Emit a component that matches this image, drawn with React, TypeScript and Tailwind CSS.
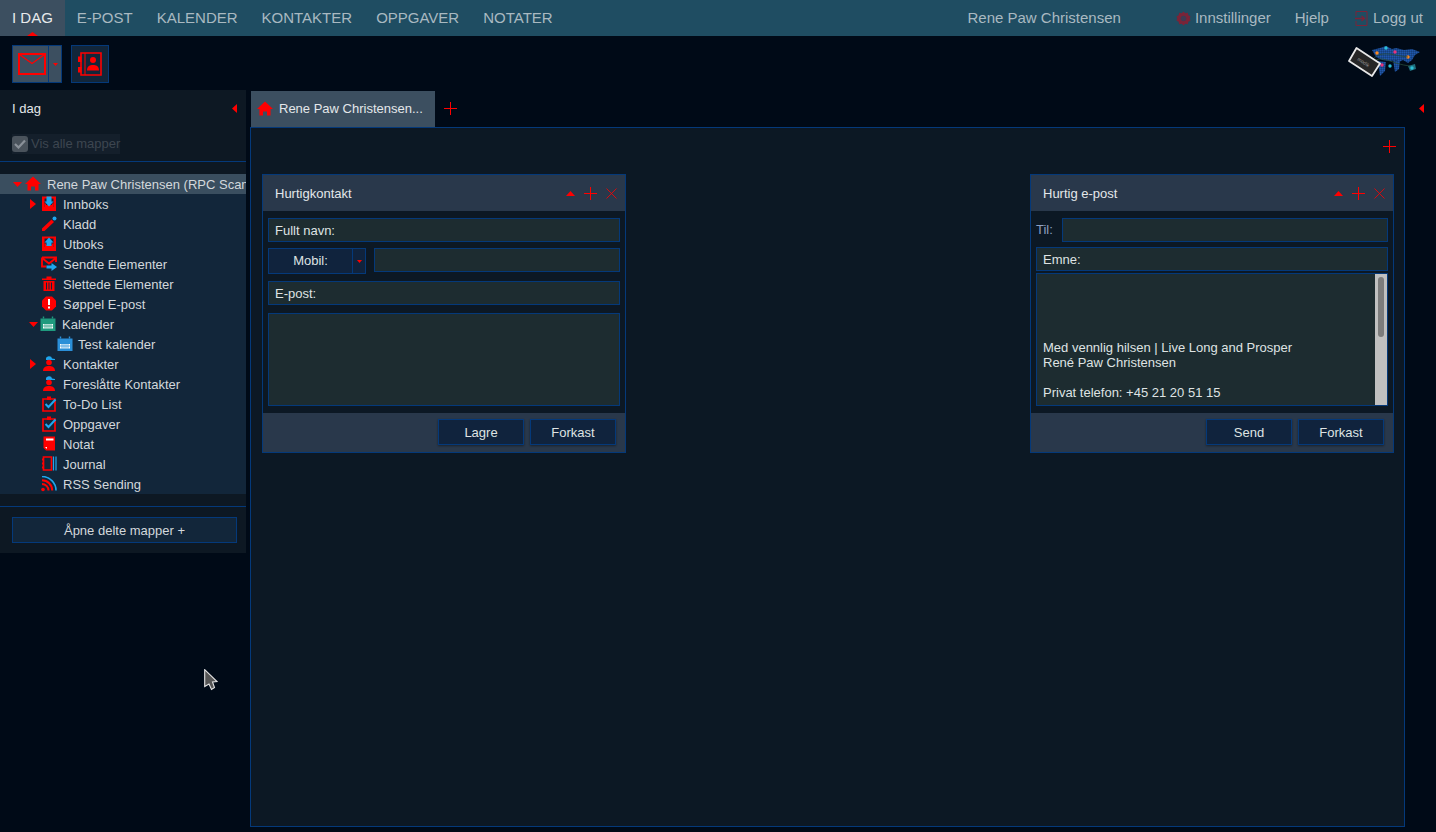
import React from "react";

const R = "#ff0000";
const B = "#1ea7ee";

const Home = () => (
  <svg width="16" height="16" viewBox="0 0 16 16"><path d="M8 0.5 L16 8 H13.5 V14.5 H10 V10.5 H6 V14.5 H2.5 V8 H0 Z" fill={R} /></svg>
);
const Inbox = ({ up }: { up?: boolean }) => (
  <svg width="16" height="16" viewBox="0 0 16 16">
    <path d="M1 0.5 H15 V15 H1 Z M3.5 2.5 V11 H12.5 V2.5 Z" fill={R} fillRule="evenodd" />
    <path d="M5 7.5 H3.5 V11 H12.5 V7.5 H11 V9 H5 Z" fill={R} />
    {up ? <path d="M8 1.5 L12.5 6.5 H10.5 V10 H5.5 V6.5 H3.5 Z" fill={B} /> : <path d="M8 10.5 L12.5 5.5 H10.5 V0.5 H5.5 V5.5 H3.5 Z" fill={B} />}
  </svg>
);
const Pencil = () => (
  <svg width="16" height="16" viewBox="0 0 16 16">
    <path d="M1 12.5 L10.5 3.5 L13 6 L3.5 15 H1 Z" fill={R} />
    <circle cx="13.5" cy="2.5" r="2" fill={B} />
  </svg>
);
const Sent = () => (
  <svg width="16" height="16" viewBox="0 0 16 16">
    <path d="M1 1.5 H15 V6 M1 1.5 V10.5 H5.5 M1 2 L8 7.5 L15 2" fill="none" stroke={R} strokeWidth="1.9" />
    <path d="M5.5 9.5 H10.5 V7 L16 11 L10.5 15 V12.5 H5.5 Z" fill={B} />
  </svg>
);
const Trash = () => (
  <svg width="16" height="16" viewBox="0 0 16 16">
    <path d="M1 2.5 H15 V4 H1 Z M5.5 0.5 H10.5 V2.5 H5.5 Z" fill={R} />
    <path d="M2.5 5 H13.5 V15 H2.5 Z" fill={R} />
    <path d="M5.5 6.5 V13.5 M8 6.5 V13.5 M10.5 6.5 V13.5" stroke="#12263a" strokeWidth="1" />
  </svg>
);
const Alert = () => (
  <svg width="16" height="16" viewBox="0 0 16 16">
    <path d="M5 0.5 H11 L15 4.5 V10.5 L11 14.5 H5 L1 10.5 V4.5 Z" fill={R} />
    <path d="M7 3 H9 V9 H7 Z M7 10.5 H9 V12.5 H7 Z" fill="#fff" />
  </svg>
);
const Cal = ({ c }: { c: string }) => (
  <svg width="16" height="16" viewBox="0 0 16 16">
    <path d="M0.5 2.5 H15.5 V15 H0.5 Z" fill={c} />
    <path d="M3.5 0.5 V2.5 M12.5 0.5 V2.5" stroke={c} strokeWidth="1.4" />
    <path d="M3 8 H13 V12.5 H3 Z" fill="#fff" />
    <path d="M5 8 V12.5 M7 8 V12.5 M9 8 V12.5 M11 8 V12.5 M3 10 H13" stroke={c} strokeWidth="0.7" />
  </svg>
);
const Person = () => (
  <svg width="16" height="16" viewBox="0 0 16 16">
    <path d="M5 3 A3 2.6 0 0 1 11 2.5 L14 3 V4 H5 Z" fill={B} />
    <circle cx="8" cy="6.5" r="2.8" fill={R} />
    <path d="M2 15 C2 11 5 10 8 10 C11 10 14 11 14 15 Z" fill={R} />
  </svg>
);
const Todo = () => (
  <svg width="16" height="16" viewBox="0 0 16 16">
    <path d="M2 3 H14 V15 H2 Z" fill="none" stroke={R} strokeWidth="1.7" />
    <path d="M6 0.5 H10 V4 H6 Z" fill={R} />
    <path d="M4.5 8 L7.5 11 L14.5 3.5" fill="none" stroke={B} strokeWidth="2" />
  </svg>
);
const Note = () => (
  <svg width="16" height="16" viewBox="0 0 16 16">
    <path d="M2.5 0.5 H14 V14.5 H5 L2.5 12 Z" fill={R} />
    <path d="M5 2.5 H12.5 V4.5 H5 Z" fill="#fff" />
    <path d="M4 11 H6 V13 Z" fill="#fff" />
  </svg>
);
const Journal = () => (
  <svg width="16" height="16" viewBox="0 0 16 16">
    <path d="M2.5 1 H10.5 V14 H2.5 Z" fill="none" stroke={R} strokeWidth="1.7" />
    <path d="M1 3.5 H2.5 M1 7.5 H2.5 M1 11.5 H2.5" stroke={R} strokeWidth="2" />
    <path d="M12.5 0.5 V14.5 M15 0.5 V14.5" stroke={B} strokeWidth="1.2" />
  </svg>
);
const Rss = () => (
  <svg width="16" height="16" viewBox="0 0 16 16" fill="none">
    <circle cx="2" cy="13.5" r="1.8" fill={R} />
    <path d="M1 8 A6.5 6.5 0 0 1 7.5 14.5" stroke={R} strokeWidth="2" />
    <path d="M1 4.3 A10.2 10.2 0 0 1 11.2 14.5" stroke={R} strokeWidth="2" />
    <path d="M1 0.5 A14 14 0 0 1 15 14.5" stroke={B} strokeWidth="1.6" />
  </svg>
);
const ArrowR = () => <svg width="6" height="10" viewBox="0 0 6 10"><path d="M0 0 L6 5 L0 10 Z" fill={R} /></svg>;
const ArrowL = () => <svg width="5" height="9" viewBox="0 0 5 9"><path d="M5 0 L0 4.5 L5 9 Z" fill={R} /></svg>;
const ArrowD = () => <svg width="9" height="5" viewBox="0 0 9 5"><path d="M0 0 H9 L4.5 5 Z" fill={R} /></svg>;

const Plus = () => (
  <svg width="13" height="13" viewBox="0 0 13 13"><path d="M6.5 0 V13 M0 6.5 H13" stroke={R} strokeWidth="1" /></svg>
);

type Row = { label: string; icon: React.ReactNode; arrow?: "r" | "d"; cls: string };
const rows: Row[] = [
  { label: "Innboks", icon: <Inbox />, arrow: "r", cls: "pl-[30px]" },
  { label: "Kladd", icon: <Pencil />, cls: "pl-[30px]" },
  { label: "Utboks", icon: <Inbox up />, cls: "pl-[30px]" },
  { label: "Sendte Elementer", icon: <Sent />, cls: "pl-[30px]" },
  { label: "Slettede Elementer", icon: <Trash />, cls: "pl-[30px]" },
  { label: "Søppel E-post", icon: <Alert />, cls: "pl-[30px]" },
  { label: "Kalender", icon: <Cal c="#1f9a7e" />, arrow: "d", cls: "pl-[29px]" },
  { label: "Test kalender", icon: <Cal c="#2a8fd8" />, cls: "pl-[46px]" },
  { label: "Kontakter", icon: <Person />, arrow: "r", cls: "pl-[30px]" },
  { label: "Foreslåtte Kontakter", icon: <Person />, cls: "pl-[30px]" },
  { label: "To-Do List", icon: <Todo />, cls: "pl-[30px]" },
  { label: "Oppgaver", icon: <Todo />, cls: "pl-[30px]" },
  { label: "Notat", icon: <Note />, cls: "pl-[30px]" },
  { label: "Journal", icon: <Journal />, cls: "pl-[30px]" },
  { label: "RSS Sending", icon: <Rss />, cls: "pl-[30px]" },
];

const Field = ({ children, className = "" }: { children?: React.ReactNode; className?: string }) => (
  <div className={`h-6 border border-[#04397a] bg-[#1d2c30] px-[6px] text-[13px] leading-[23px] text-[#dfe3e3] ${className}`}>{children}</div>
);

const Btn = ({ children }: { children: React.ReactNode }) => (
  <div className="h-[26px] w-[86px] border border-[#04397a] bg-[#10233d] text-center text-[13px] leading-[25px] text-[#dfe3e3] shadow-[0_1px_2px_rgba(0,0,0,0.4)]">{children}</div>
);

const Widget = ({ title, children, buttons }: { title: string; children: React.ReactNode; buttons: string[] }) => (
  <div className="flex h-[279px] w-[364px] flex-col border border-[#04397a] bg-[#0c1824]">
    <div className="flex h-[36px] shrink-0 items-start bg-[#29384b] pl-3 pr-[8px] text-[13px] text-[#e4e7ea]">
      <span className="flex-1 leading-[37px]">{title}</span>
      <svg width="9" height="5" viewBox="0 0 9 5" className="mr-[9px] mt-[16px]"><path d="M0 5 H9 L4.5 0 Z" fill={R} /></svg>
      <span className="mr-[9px] mt-[12px] flex"><Plus /></span>
      <svg width="11" height="11" viewBox="0 0 11 11" className="mt-[13px]"><path d="M0.5 0.5 L10.5 10.5 M10.5 0.5 L0.5 10.5" stroke={R} strokeWidth="0.8" /></svg>
    </div>
    <div className="h-[202px] shrink-0 px-[5px] pt-[7px]">{children}</div>
    <div className="flex flex-1 items-start justify-end gap-[6px] bg-[#29384b] pr-[9px] pt-[6px]">
      {buttons.map((b) => <Btn key={b}>{b}</Btn>)}
    </div>
  </div>
);

const Logo = () => {
  const dots: [number, number, string][] = [
    [1377, 53, "#ff8a1e"], [1395, 52, "#e8337a"], [1408, 57, "#ff8a1e"], [1382, 65, "#e8337a"], [1390, 66, "#2cc0d8"], [1412, 68, "#2cc0d8"], [1386, 48, "#2cc0d8"],
  ];
  return (
    <svg width="76" height="34" viewBox="1347 44 76 34">
      <defs>
        <pattern id="logo-grid" width="2" height="2" patternUnits="userSpaceOnUse">
          <rect width="2" height="2" fill="#2058ac" />
          <rect x="1.5" width="0.5" height="2" fill="#000a17" opacity="0.35" />
          <rect y="1.5" width="2" height="0.5" fill="#000a17" opacity="0.35" />
        </pattern>
      </defs>
      <path d="M1372 50 L1380 48 L1386 46 L1392 49 L1396 48 L1404 50 L1412 49 L1420 52 L1415 55 L1412 60 L1408 63 L1403 60 L1399 62 L1396 60 L1390 61 L1382 60 L1376 57 Z" fill="url(#logo-grid)" />
      <path d="M1378 61 L1386 62 L1385 71 L1380 76 L1379 69 Z" fill="url(#logo-grid)" />
      <path d="M1393 60 L1400 61 L1399 69 L1395 72 Z" fill="url(#logo-grid)" />
      <path d="M1408 66 L1415 64 L1416 69 L1410 71 Z" fill="#1f6f7e" />
      {dots.map(([x, y, c], i) => <circle key={i} cx={x} cy={y} r="1.7" fill={c} />)}
      <path d="M1374 58 C1382 50 1396 56 1408 57 M1376 60 C1384 56 1392 64 1410 66" stroke="#274a3a" strokeWidth="0.8" fill="none" />
      <path d="M1356.5 48 L1380 63.5 L1372 76 L1349 61 Z" fill="#262626" stroke="#e8e8e8" strokeWidth="1.8" strokeLinejoin="round" />
      <text x="1357" y="60" fontSize="5" fill="#9a9a9a" transform="rotate(33 1357 60)">modik</text>
    </svg>
  );
};

export default function App() {
  return (
    <div className="relative flex h-[832px] w-full flex-col overflow-hidden bg-[#000a17] font-['Liberation_Sans',Arial,sans-serif]">
      {/* top nav */}
      <div className="flex h-9 shrink-0 items-stretch bg-[#1f4d62] text-[15px] text-[#a9b9c1]">
        <div className="relative flex items-center bg-[#3c4f60] px-3 text-[#e8eaec]">
          I DAG
          <svg width="11" height="4" viewBox="0 0 11 4" className="absolute bottom-0 left-[27px]"><path d="M0 4 L5.5 0 L11 4 Z" fill={R} /></svg>
        </div>
        {["E-POST", "KALENDER", "KONTAKTER", "OPPGAVER", "NOTATER"].map((t) => (
          <div key={t} className="flex items-center px-3">{t}</div>
        ))}
        <div className="flex-1" />
        <div className="mr-[55px] flex items-center">Rene Paw Christensen</div>
        <div className="mr-6 flex items-center gap-[4px]">
          <svg width="15" height="15" viewBox="0 0 15 15">
            <path d="M7.5 0.5 L9.3 2.2 L11.8 1.8 L12.4 4.2 L14.6 5.4 L13.7 7.5 L14.6 9.6 L12.4 10.8 L11.8 13.2 L9.3 12.8 L7.5 14.5 L5.7 12.8 L3.2 13.2 L2.6 10.8 L0.4 9.6 L1.3 7.5 L0.4 5.4 L2.6 4.2 L3.2 1.8 L5.7 2.2 Z" fill="#7a2438" />
            <circle cx="7.5" cy="7.5" r="2.8" fill="#3f3a52" />
          </svg>
          Innstillinger
        </div>
        <div className="mr-[26px] flex items-center">Hjelp</div>
        <div className="mr-[13px] flex items-center gap-[5px]">
          <svg width="13" height="15" viewBox="0 0 13 15" fill="none">
            <path d="M1 5 V0.5 H12 V14.5 H1 V10" stroke="#7a2438" strokeWidth="1" />
            <path d="M0 7.5 H9 M6.5 5 L9.5 7.5 L6.5 10" stroke="#7a2438" strokeWidth="1.4" />
          </svg>
          Logg ut
        </div>
      </div>

      {/* toolbar */}
      <div className="flex h-[54px] shrink-0 items-start pl-3 pr-[13px] pt-[9px]">
        <div className="flex h-[38px] w-[50px] border border-[#04397a] bg-[#3c4f60]">
          <div className="flex w-[35px] items-center justify-center">
            <svg width="28" height="22" viewBox="0 0 28 22" fill="none" className="ml-[2px]">
              <rect x="1" y="1" width="26" height="20" stroke={R} strokeWidth="2" />
              <path d="M1.5 1.5 L14 10.5 L26.5 1.5" stroke={R} strokeWidth="1.4" />
            </svg>
          </div>
          <div className="flex flex-1 items-center justify-center border-l border-[#04397a]">
            <svg width="5" height="3" viewBox="0 0 5 3"><path d="M0 0 H5 L2.5 3 Z" fill={R} /></svg>
          </div>
        </div>
        <div className="ml-[9px] flex h-[38px] w-[38px] items-center justify-center border border-[#04397a] bg-[#12263a]">
          <svg width="24" height="24" viewBox="0 0 24 24" fill="none">
            <path d="M3 1 H23 V23 H3 Z" stroke={R} strokeWidth="1.6" />
            <path d="M7 1 V23" stroke={R} strokeWidth="1" />
            <path d="M0 4.5 H3.5 V10 H0 Z M0 15 H3.5 V20.5 H0 Z" fill={R} />
            <circle cx="15" cy="8" r="3" fill={R} />
            <path d="M9 18.5 C9 14 12 13 15 13 C18 13 21 14 21 18.5 Z" fill={R} />
          </svg>
        </div>
        <div className="flex-1" />
        <div className="-mt-[1px]"><Logo /></div>
      </div>

      {/* body */}
      <div className="flex min-h-0 flex-1 gap-1">
        {/* sidebar */}
        <div className="flex h-[463px] w-[246px] shrink-0 flex-col bg-[#0d1823]">
          <div className="flex h-[37px] shrink-0 items-center justify-between pl-3 pr-[9px] text-[13px] text-[#e4e7ea]">
            I dag
            <ArrowL />
          </div>
          <div className="h-[35px] shrink-0 border-b border-[#04397a] pl-3 pt-[7px]">
            <div className="flex h-5 w-[108px] items-center whitespace-nowrap bg-[#141f2b] text-[13px] text-[#3d4650]">
              <div className="flex h-4 w-4 shrink-0 items-center justify-center rounded-[3px] bg-[#4a535c]">
                <svg width="12" height="10" viewBox="0 0 12 10" fill="none"><path d="M1 5 L4.5 8.5 L11 1.5" stroke="#8a9199" strokeWidth="2.2" /></svg>
              </div>
              <span className="ml-[3px]">Vis alle mapper</span>
            </div>
          </div>
          <div className="mt-3 shrink-0 overflow-hidden bg-[#12263a] text-[13px] leading-[21px] text-[#d3d8dc]">
            <div className="flex h-5 items-center whitespace-nowrap bg-[#3a4e5f] pl-[13px]">
              <span className="flex w-3 shrink-0"><ArrowD /></span>
              <span className="flex w-4 shrink-0"><Home /></span>
              <span className="ml-[6px]">Rene Paw Christensen (RPC Scandinavia)</span>
            </div>
            {rows.map((r) => (
              <div key={r.label} className={`flex h-5 items-center whitespace-nowrap ${r.cls}`}>
                <span className="flex w-[11px] shrink-0">{r.arrow === "r" ? <ArrowR /> : r.arrow === "d" ? <ArrowD /> : null}</span>
                <span className="flex w-4 shrink-0">{r.icon}</span>
                <span className={r.label === "Test kalender" ? "ml-[5px]" : "ml-[6px]"}>{r.label}</span>
              </div>
            ))}
          </div>
          <div className="mt-3 shrink-0 border-t border-[#04397a] px-3 pt-[10px]">
            <div className="h-[26px] w-[225px] border border-[#04397a] bg-[#12263a] text-center text-[13px] leading-[25px] text-[#d3d8dc]">Åpne delte mapper +</div>
          </div>
        </div>

        {/* main */}
        <div className="flex min-w-0 flex-1 flex-col pb-[5px]">
          <div className="flex h-[37px] shrink-0 items-end">
            <div className="ml-px flex h-9 w-[184px] items-center bg-[#3c4f60] pl-[6px] text-[13px] text-[#e4e7ea]">
              <Home />
              <span className="ml-[6px]">Rene Paw Christensen...</span>
            </div>
            <span className="mb-[12px] ml-[9px] flex"><Plus /></span>
            <div className="flex-1" />
            <span className="mb-[14px] mr-[12px] flex"><ArrowL /></span>
          </div>
          <div className="mr-[31px] flex-1 border border-[#04397a] bg-[#0c1824]">
            <div className="flex justify-end pr-[8px] pt-[12px]"><Plus /></div>
            <div className="mt-[21px] flex justify-between pl-[11px] pr-[10px]">
              <Widget title="Hurtigkontakt" buttons={["Lagre", "Forkast"]}>
                <Field>Fullt navn:</Field>
                <div className="mt-[6px] flex items-start">
                  <div className="flex h-[26px] w-[98px] border border-[#04397a] bg-[#10233d] text-[13px] text-[#dfe3e3]">
                    <div className="flex flex-1 items-center justify-center border-r border-[#04397a]">Mobil:</div>
                    <div className="flex w-3 items-center justify-center">
                      <svg width="5" height="3" viewBox="0 0 5 3"><path d="M0 0 H5 L2.5 3 Z" fill={R} /></svg>
                    </div>
                  </div>
                  <Field className="ml-2 flex-1" />
                </div>
                <Field className="mt-[7px]">E-post:</Field>
                <Field className="mt-2 h-[93px]" />
              </Widget>
              <Widget title="Hurtig e-post" buttons={["Send", "Forkast"]}>
                <div className="flex items-center">
                  <span className="w-[26px] shrink-0 text-[13px] text-[#8f9fc0]">Til:</span>
                  <Field className="flex-1" />
                </div>
                <Field className="mt-[5px]">Emne:</Field>
                <div className="relative mt-[2px] h-[133px] overflow-hidden border border-[#04397a] bg-[#1d2c30] px-[6px] pt-[66px] text-[13px] leading-[15px] text-[#dfe3e3]">
                  <div>Med vennlig hilsen | Live Long and Prosper</div>
                  <div>René Paw Christensen</div>
                  <div className="h-[15px]" />
                  <div>Privat telefon: +45 21 20 51 15</div>
                  <div className="absolute bottom-0 right-0 top-0 w-3 bg-[#c0c0c0]">
                    <div className="ml-[3px] mt-[3px] h-[60px] w-[6px] rounded-[3px] bg-[#7c7c7c]" />
                  </div>
                </div>
              </Widget>
            </div>
          </div>
        </div>
      </div>

      {/* mouse cursor */}
      <svg width="14" height="22" viewBox="0 0 14 22" className="absolute left-[204px] top-[669px]">
        <path d="M0.7 0.7 L13 12.5 L8.5 13 L10.5 18.5 L7.5 20.5 L5 15 L0.7 17.5 Z" fill="#555" stroke="#e4e4e4" strokeWidth="1.1" />
      </svg>
    </div>
  );
}
